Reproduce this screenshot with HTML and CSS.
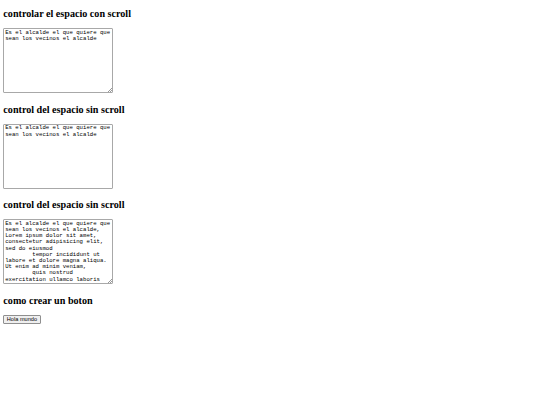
FILE: index.html
```html
<!DOCTYPE html>
<html lang="es">
<head>
<meta charset="utf-8">
<title>Textarea y botón</title>
<link rel="stylesheet" href="styles.css">
</head>
<body>
<h2 class="title">controlar el espacio con scroll</h2>
<div class="field field-resizable">
<textarea class="box box-scroll">Es el alcalde el que quiere que
sean los vecinos el alcalde</textarea>
</div>
<h2 class="title">control del espacio sin scroll</h2>
<div class="field">
<textarea class="box box-fixed">Es el alcalde el que quiere que
sean los vecinos el alcalde</textarea>
</div>
<h2 class="title">control del espacio sin scroll</h2>
<div class="field field-resizable">
<textarea class="box box-long">Es el alcalde el que quiere que
sean los vecinos el alcalde,
Lorem ipsum dolor sit amet,
consectetur adipisicing elit,
sed do eiusmod
        tempor incididunt ut
labore et dolore magna aliqua.
Ut enim ad minim veniam,
        quis nostrud
exercitation ullamco laboris
nisi ut aliquip ex ea commodo
consequat.</textarea>
</div>
<h2 class="title">como crear un boton</h2>
<div class="actions">
<button class="btn" type="button">Hola mundo</button>
</div>
</body>
</html>
```

FILE: styles.css
```css
html, body {
  background: #ffffff;
}

body {
  margin: 0 3.33px;
  font-family: "Liberation Serif", "Times New Roman", serif;
  font-size: 6.67px;
  color: #000000;
}

.title {
  font-family: "Liberation Serif", "Times New Roman", serif;
  font-size: 10.15px;
  line-height: 11px;
  font-weight: bold;
  margin: 10.5px 0 9px;
}

.title:first-child {
  margin-top: 8px;
}

.field {
  position: relative;
  width: 110px;
  height: 65px;
}

.field-resizable::after {
  content: "";
  position: absolute;
  right: 1px;
  bottom: 1px;
  width: 4px;
  height: 4px;
  background: linear-gradient(135deg,
    transparent 0 42%, #9a9a9a 42% 54%, transparent 54% 70%,
    #9a9a9a 70% 84%, transparent 84%);
  pointer-events: none;
}

.box {
  display: block;
  box-sizing: border-box;
  width: 110px;
  height: 65px;
  margin: 0;
  padding: 0.83px;
  border: 1px solid #a8a8a8;
  border-radius: 1px;
  font-family: "Liberation Mono", "Courier New", monospace;
  font-size: 5.65px;
  line-height: 6.2px;
  color: #000000;
  background: #ffffff;
  white-space: pre-wrap;
  resize: none;
}

.box-scroll {
  overflow: auto;
  scrollbar-width: none;
}

.box-fixed,
.box-long {
  overflow: hidden;
}

.actions {
  display: flex;
}

.btn {
  margin: 0;
  padding: 0.4px 2.5px;
  font-family: "Liberation Sans", Arial, sans-serif;
  font-size: 5.6px;
  line-height: 6.4px;
  color: #000000;
  background: #efefef;
  border: 1px solid #8f8f8f;
  border-radius: 1px;
}
```
